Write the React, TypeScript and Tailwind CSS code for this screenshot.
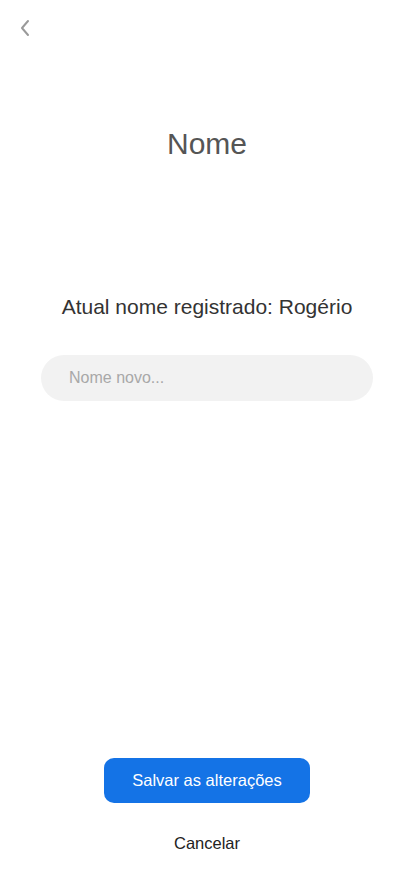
import { useState } from 'react';

export default function App() {
  const [name, setName] = useState('');

  return (
    <div className="flex h-[896px] w-full flex-col bg-white font-['Liberation_Sans',Arial,sans-serif]">
      {/* Back */}
      <div className="px-[17px] pt-[18px]">
        <button className="flex h-[20px] w-[16px] items-center justify-center text-[#9a9a9a]">
          <svg width="12" height="18" viewBox="0 0 12 18" fill="none">
            <path d="M9 2L3 9l6 7" stroke="currentColor" strokeWidth="2" strokeLinecap="round" strokeLinejoin="round" />
          </svg>
        </button>
      </div>

      <h1 className="mt-[88px] text-center text-[30px] leading-[36px] text-[#555555]">Nome</h1>

      <p className="mt-[132px] text-center text-[21px] leading-[26px] text-[#333333]">
        Atual nome registrado: Rogério
      </p>

      <div className="mt-[35px] px-[41px]">
        <input
          type="text"
          value={name}
          onChange={(e) => setName(e.target.value)}
          placeholder="Nome novo..."
          className="h-[46px] w-full rounded-full bg-[#f2f2f2] px-[28px] text-[16px] text-[#333] outline-none placeholder:text-[#a8a8a8]"
        />
      </div>

      <div className="mt-auto flex flex-col items-center pb-[35px]">
        <button className="h-[45px] w-[206px] rounded-[10px] bg-[#1473e6] text-[16.5px] text-white">
          Salvar as alterações
        </button>
        <button className="mt-[22px] text-[16.5px] leading-[36px] text-[#222222]">Cancelar</button>
      </div>
    </div>
  );
}
